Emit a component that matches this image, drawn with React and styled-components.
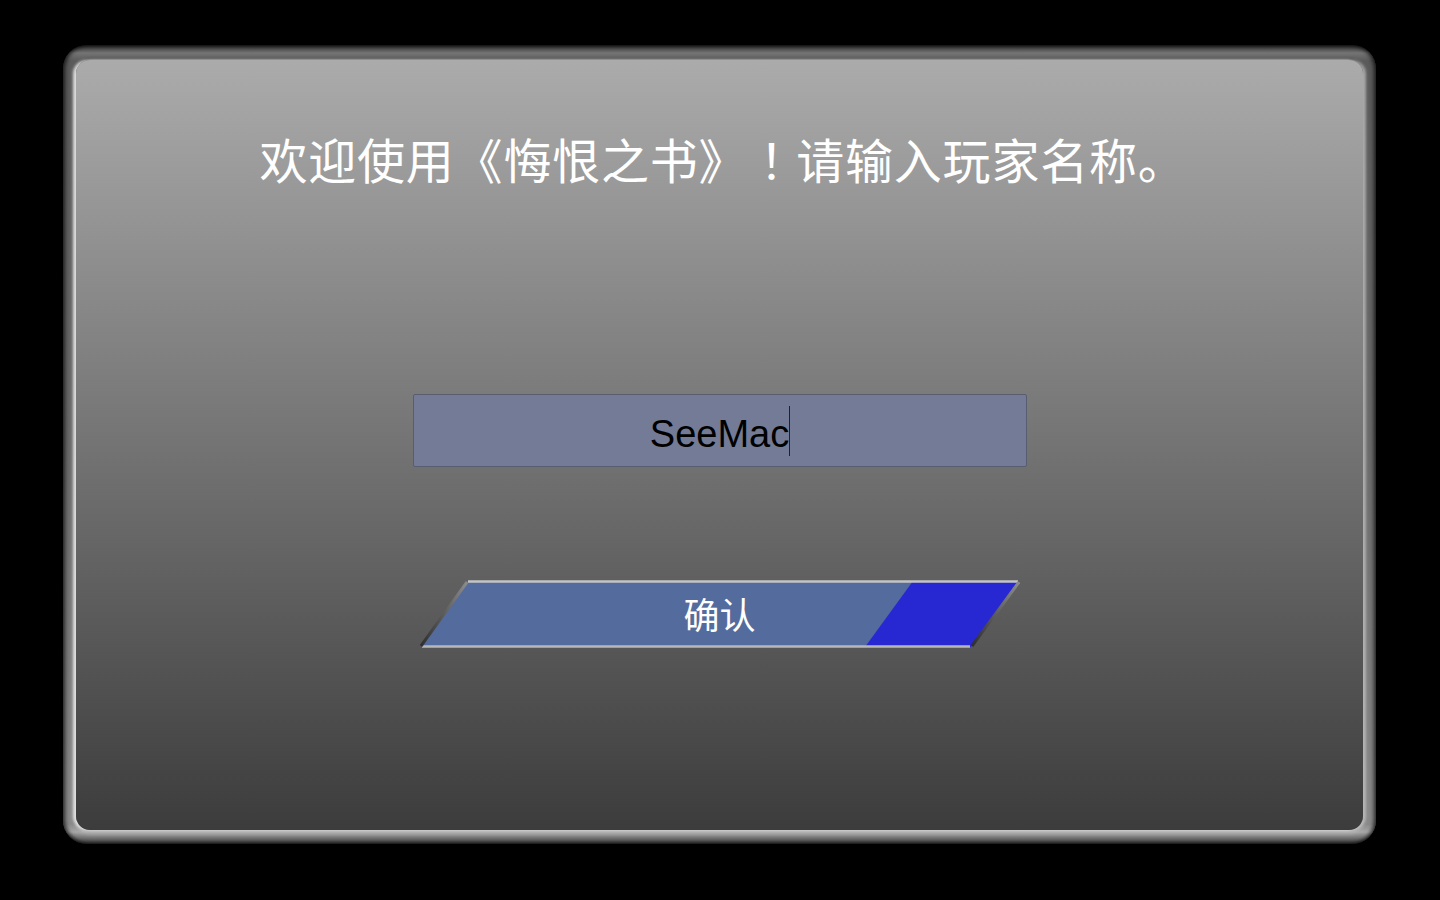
import styled, { createGlobalStyle } from "styled-components";

const GlobalStyle = createGlobalStyle`
  html, body {
    margin: 0;
    padding: 0;
    background: #000;
  }
  body {
    font-family: "Noto Sans CJK SC", "Noto Sans", sans-serif;
  }
`;

const Screen = styled.div`
  width: 1440px;
  height: 900px;
  box-sizing: border-box;
  padding: 45px 64px 56px 63px;
  display: flex;
  background: #000;
`;

const Frame = styled.div`
  flex: 1;
  display: flex;
  padding: 15px 13px 14px 13px;
  border-radius: 24px;
  background: linear-gradient(
    180deg,
    #2a2a2a 0%,
    #747474 1%,
    #5a5a5a 2%,
    #6a6a6a 50%,
    #8a8a8a 97.5%,
    #a8a8a8 98.5%,
    #3a3a3a 100%
  );
  box-shadow: inset 2px 0 4px rgba(0, 0, 0, 0.7), inset -2px 0 4px rgba(0, 0, 0, 0.7);
`;

const Panel = styled.div`
  flex: 1;
  display: flex;
  flex-direction: column;
  align-items: center;
  border-radius: 14px;
  padding-top: 68px;
  background: linear-gradient(180deg, #ababab 0%, #3c3c3c 100%);
  box-shadow: -3px 0 3px rgba(240, 240, 240, 0.85), 3px 0 3px rgba(210, 210, 210, 0.6),
    0 4px 4px rgba(190, 190, 190, 0.55), 0 -2px 2px rgba(60, 60, 60, 0.6);
`;

const Title = styled.h1`
  margin: 0;
  font-family: "Noto Sans CJK SC", sans-serif;
  font-weight: 400;
  font-size: 48px;
  line-height: 60px;
  letter-spacing: 0.8px;
  color: #fff;
  padding-left: 7px;
`;

const Bang = styled.span`
  font-family: "Noto Sans CJK TC", sans-serif;
`;

const NameField = styled.div`
  margin-top: 206px;
  width: 614px;
  height: 73px;
  box-sizing: border-box;
  padding-top: 7px;
  display: flex;
  align-items: center;
  justify-content: center;
  background: #737b96;
  border: 1px solid #585d6f;
  border-radius: 2px;
  font-family: "Liberation Sans", Arial, sans-serif;
  font-size: 38px;
  color: #000;
`;

const Caret = styled.span`
  display: inline-block;
  width: 1px;
  height: 50px;
  margin-top: -7px;
  background: #222;
`;

const NameText = styled.span`
  display: inline-flex;
  align-items: center;
  margin-left: 1px;
`;

const ConfirmButton = styled.button`
  position: relative;
  margin-top: 113px;
  width: 600px;
  height: 68px;
  padding: 0;
  border: none;
  background: transparent;
  cursor: pointer;
  display: flex;
  align-items: center;
  justify-content: center;
`;

const ButtonShape = styled.svg`
  position: absolute;
  inset: 0;
`;

const ButtonLabel = styled.span`
  position: relative;
  font-family: "Noto Sans CJK SC", sans-serif;
  font-size: 36px;
  color: #fff;
  line-height: 1;
  margin-top: -2px;
`;

const App = () => {
  return (
    <>
      <GlobalStyle />
      <Screen>
        <Frame>
          <Panel>
            <Title>
              欢迎使用《悔恨之书》<Bang>！</Bang>请输入玩家名称。
            </Title>
            <NameField>
              <NameText>
                SeeMac
                <Caret />
              </NameText>
            </NameField>
            <ConfirmButton>
              <ButtonShape width="600" height="68" viewBox="0 0 600 68">
                <defs>
                  <linearGradient id="edge" x1="0" y1="0" x2="1" y2="0">
                    <stop offset="0" stopColor="#2e2e2e" />
                    <stop offset="1" stopColor="#8c8c8c" />
                  </linearGradient>
                </defs>
                <polygon points="48,1 599,1 551,67 1,67" fill="#546b9d" />
                <polygon points="493,1 599,1 551,67 445,67" fill="#2828d2" />
                <line x1="48" y1="1.5" x2="598" y2="1.5" stroke="#c4c4c4" strokeWidth="2.5" />
                <line x1="2" y1="66.5" x2="550" y2="66.5" stroke="#b8b8b8" strokeWidth="2.5" />
                <line x1="47" y1="2" x2="1" y2="66" stroke="url(#edge)" strokeWidth="3" />
                <line x1="599" y1="2" x2="552" y2="66" stroke="url(#edge)" strokeWidth="3" />
              </ButtonShape>
              <ButtonLabel>确认</ButtonLabel>
            </ConfirmButton>
          </Panel>
        </Frame>
      </Screen>
    </>
  );
};

export default App;
